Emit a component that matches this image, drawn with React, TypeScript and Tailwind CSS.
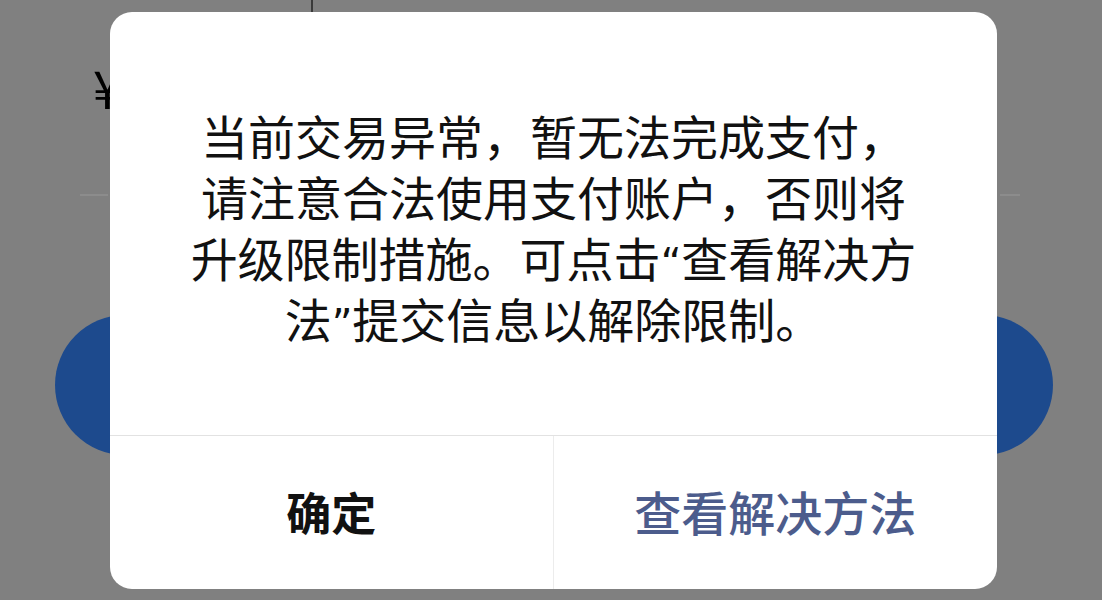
import React from 'react';

// Narrow Latin quotes, as the reference shows
const Q = ({ children }: { children: React.ReactNode }) => (
  <span style={{ fontFamily: '"DejaVu Sans", sans-serif' }} className="text-[40px] leading-none">
    {children}
  </span>
);

const FONT = { fontFamily: '"Noto Sans CJK SC", "Noto Sans", sans-serif' };

export default function App() {
  return (
    <div className="relative w-[1102px] h-[600px] overflow-hidden bg-[#808080]" style={FONT}>
      {/* Page underneath the mask */}
      <div className="flex flex-col">
        <div className="h-[14px] flex">
          <div className="ml-[311px] w-[2px] h-[12px] bg-[#3a3a3a]" />
        </div>
        <div className="flex items-center h-[140px] pl-[93px] pt-[6px]">
          <span className="text-[52px] leading-none text-black">¥</span>
        </div>
        <div className="flex justify-between h-[82px] items-center">
          <div className="w-[28px] h-[2px] bg-[#8c8c8c] ml-[80px]" />
          <div className="w-[20px] h-[2px] bg-[#8c8c8c] mr-[82px]" />
        </div>
        <div className="mt-[79px] ml-[55px] w-[998px] h-[140px] rounded-full bg-[#1d4a8d]" />
      </div>

      {/* Alert dialog */}
      <div className="absolute left-[110px] top-[12px] w-[887px] h-[577px] bg-white rounded-[22px] flex flex-col overflow-hidden">
        <div className="h-[423px] flex flex-col items-center justify-center text-[47px] leading-[61px] text-[#111] pt-[4px]">
          <div className="whitespace-nowrap h-[61px]">当前交易异常，暂无法完成支付，</div>
          <div className="whitespace-nowrap h-[61px]">请注意合法使用支付账户，否则将</div>
          <div className="whitespace-nowrap h-[61px]">升级限制措施。可点击<Q>“</Q>查看解决方</div>
          <div className="whitespace-nowrap h-[61px]">法<Q>”</Q>提交信息以解除限制。</div>
        </div>
        <div className="flex-1 border-t border-[#e2e2e2] grid grid-cols-2">
          <button className="flex items-center justify-center text-[45px] font-bold text-[#111] border-r border-[#ececec] pb-[2px]">
            确定
          </button>
          <button className="flex items-center justify-center text-[47px] font-medium text-[#4c5c8c] pb-[2px]">
            查看解决方法
          </button>
        </div>
      </div>
    </div>
  );
}
